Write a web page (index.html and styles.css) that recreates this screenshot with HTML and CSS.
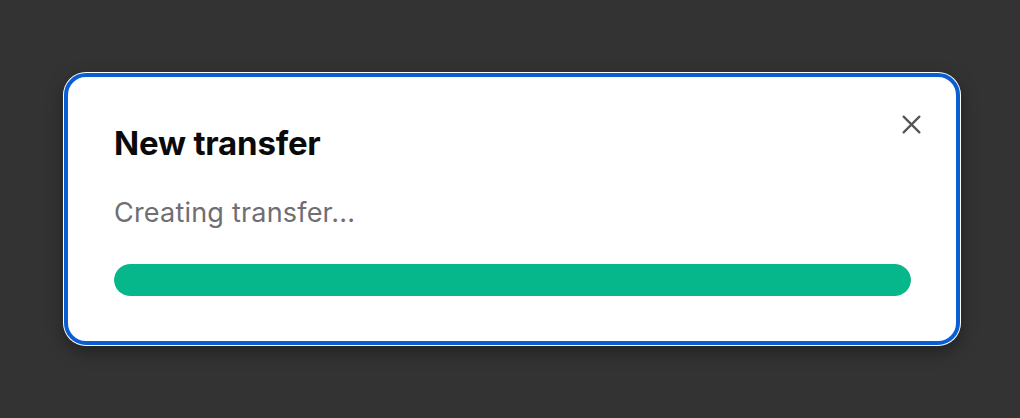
FILE: index.html
```html
<!DOCTYPE html>
<html lang="en">
<head>
<meta charset="utf-8">
<title>New transfer</title>
<link rel="stylesheet" href="styles.css">
</head>
<body>
  <div class="dialog" role="dialog" aria-labelledby="dlg-title">
    <button class="close" aria-label="Close">
      <svg viewBox="0 0 24 24" width="24" height="24" aria-hidden="true">
        <path d="M3 3 L21 21 M21 3 L3 21" stroke="#555" stroke-width="2.6" stroke-linecap="round" fill="none"/>
      </svg>
    </button>
    <h2 class="title" id="dlg-title">New transfer</h2>
    <p class="status">Creating transfer...</p>
    <div class="progress"><div class="progress-fill"></div></div>
  </div>
</body>
</html>
```

FILE: styles.css
```css
html, body {
  margin: 0;
  padding: 0;
  background: #333333;
  height: 100%;
}

body {
  font-family: Inter, "Noto Sans", "Liberation Sans", sans-serif;
  overflow: hidden;
}

.dialog {
  position: relative;
  box-sizing: border-box;
  width: 896px;
  margin: 73px 0 0 64px;
  padding: 46px 45px 45px 46px;
  background: #ffffff;
  border: 4px solid #0b5ed2;
  border-radius: 22px;
  box-shadow: 0 0 0 1px #ffffff, 0 6px 18px rgba(0, 0, 0, 0.4);
}

.title {
  margin: 0;
  font-size: 33px;
  line-height: 40px;
  font-weight: 700;
  color: #0a0a0a;
  letter-spacing: -0.2px;
}

.status {
  margin: 34px 0 0;
  font-size: 27px;
  line-height: 32px;
  font-weight: 400;
  color: #6e6e73;
  letter-spacing: 0.2px;
}

.progress {
  margin-top: 35px;
  height: 32px;
  border-radius: 16px;
  background: #e6e6e6;
  overflow: hidden;
}

.progress-fill {
  width: 100%;
  height: 100%;
  background: #07b78c;
  border-radius: 16px;
}

.close {
  position: absolute;
  top: 35px;
  right: 33px;
  width: 24px;
  height: 24px;
  padding: 0;
  border: 0;
  background: transparent;
  cursor: pointer;
  display: flex;
  align-items: center;
  justify-content: center;
}

.close svg {
  width: 21px;
  height: 21px;
}
```
